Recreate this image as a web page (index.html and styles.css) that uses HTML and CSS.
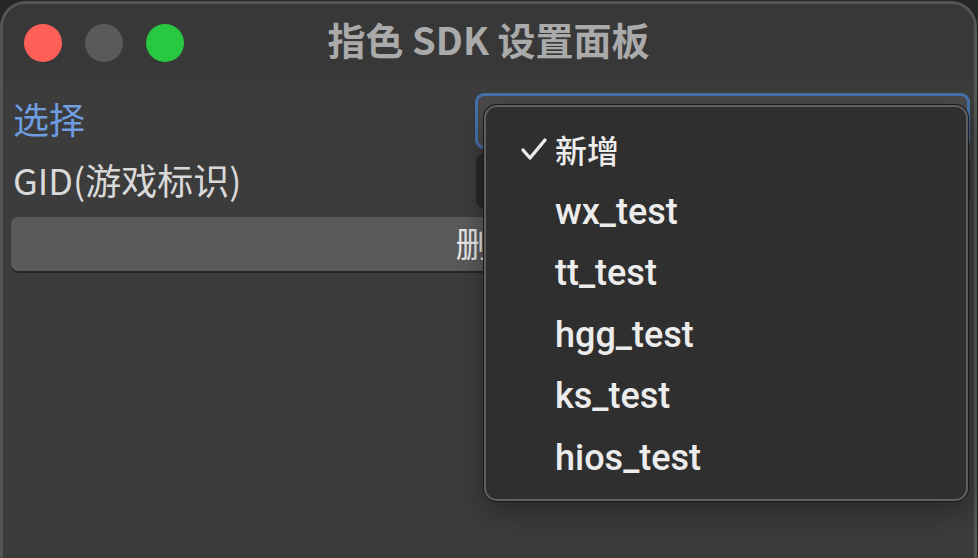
FILE: index.html
```html
<!DOCTYPE html>
<html lang="zh-CN">
<head>
<meta charset="utf-8">
<title>指色SDK设置面板</title>
<link rel="stylesheet" href="styles.css">
</head>
<body>
<div class="window">
  <div class="titlebar">
    <div class="lights">
      <span class="light red"></span>
      <span class="light gray"></span>
      <span class="light green"></span>
    </div>
    <div class="title">指色 SDK 设置面板</div>
    <div></div>
  </div>
  <div class="content">
    <div class="form">
      <div class="label label-blue">选择</div>
      <div class="control">
        <div class="select">新增</div>
        <div class="menu">
          <div class="item"><svg class="check" viewBox="0 0 28 24" width="28" height="24"><path d="M3 13 L10 21 L25 3" fill="none" stroke="#ececec" stroke-width="3.4" stroke-linecap="round" stroke-linejoin="round"/></svg><span class="cjk">新增</span></div>
          <div class="item"><span>wx_test</span></div>
          <div class="item"><span>tt_test</span></div>
          <div class="item"><span>hgg_test</span></div>
          <div class="item"><span>ks_test</span></div>
          <div class="item"><span>hios_test</span></div>
        </div>
      </div>
      <div class="label">GID(游戏标识)</div>
      <div class="control">
        <div class="input"></div>
      </div>
    </div>
    <div class="button">删除</div>
  </div>
</div>
</body>
</html>
```

FILE: styles.css
```css
html, body {
  margin: 0;
  padding: 0;
  background: #262626;
  width: 978px;
  height: 558px;
  overflow: hidden;
}

.window {
  box-sizing: border-box;
  width: 977px;
  height: 570px;
  margin-top: 1px;
  border: 3px solid #555555;
  border-bottom: none;
  border-radius: 26px 26px 0 0;
  background: #3c3c3c;
  display: flex;
  flex-direction: column;
  font-family: "Roboto", "Noto Sans CJK SC", sans-serif;
}

.titlebar {
  height: 77px;
  display: grid;
  grid-template-columns: 1fr auto 1fr;
  align-items: center;
  background: #383838;
  border-radius: 23px 23px 0 0;
}

.lights {
  display: flex;
  gap: 23px;
  padding-left: 21px;
}

.light {
  width: 38px;
  height: 38px;
  border-radius: 50%;
  display: block;
}
.red { background: #fe5f57; }
.gray { background: #5a5a5a; }
.green { background: #28c840; }

.title {
  font-family: "Noto Sans CJK SC", sans-serif;
  font-weight: 700;
  font-size: 38px;
  line-height: 44px;
  color: #aaaaaa;
  margin-top: -8px;
}

.content {
  padding: 12px 5px 0 8px;
  display: flex;
  flex-direction: column;
}

.form {
  display: grid;
  grid-template-columns: 464px 495px;
  row-gap: 5px;
}

.label {
  font-family: "Noto Sans CJK SC", sans-serif;
  font-size: 36px;
  color: #d9d9d9;
  line-height: 50px;
  padding-left: 2px;
}
.label-blue { color: #6e9de0; }

.control {
  position: relative;
}

.select {
  box-sizing: border-box;
  height: 56px;
  border: 3px solid #4572aa;
  border-radius: 9px;
  background: #4a4a4a;
  color: #e6e6e6;
  font-family: "Noto Sans CJK SC", sans-serif;
  font-size: 30px;
  padding-left: 10px;
  line-height: 50px;
}

.input {
  box-sizing: border-box;
  height: 54px;
  border-radius: 8px;
  background: #282828;
  margin-left: 1px;
}

.button {
  margin-top: 9px;
  height: 54px;
  box-sizing: border-box;
  background: #5a5a5a;
  border-radius: 7px;
  box-shadow: 0 2px 0 #262626;
  color: #e8e8e8;
  font-family: "Noto Sans CJK SC", sans-serif;
  font-size: 34px;
  line-height: 52px;
  text-align: center;
  width: 957px;
}

.menu {
  position: absolute;
  left: 9px;
  top: 12px;
  width: 484px;
  height: 396px;
  box-sizing: border-box;
  background: #2f2f2f;
  border: 2px solid #5f5f5f;
  border-radius: 13px;
  box-shadow: 0 0 0 1px #1a1a1a, 0 10px 30px rgba(0,0,0,0.35);
  padding: 11px 0 0 34px;
  display: flex;
  flex-direction: column;
  z-index: 5;
}

.item {
  height: 61.4px;
  display: flex;
  align-items: center;
  color: #ececec;
  font-size: 36px;
  font-weight: 500;
  padding-left: 35px;
  position: relative;
}

.item span {
  font-family: "Roboto", "Noto Sans CJK SC", sans-serif;
  padding-top: 4px;
}

.item .cjk {
  font-family: "Noto Sans CJK SC", sans-serif;
  font-size: 32px;
  padding-top: 0;
}

.check {
  position: absolute;
  left: 0;
  top: 19px;
}
```
